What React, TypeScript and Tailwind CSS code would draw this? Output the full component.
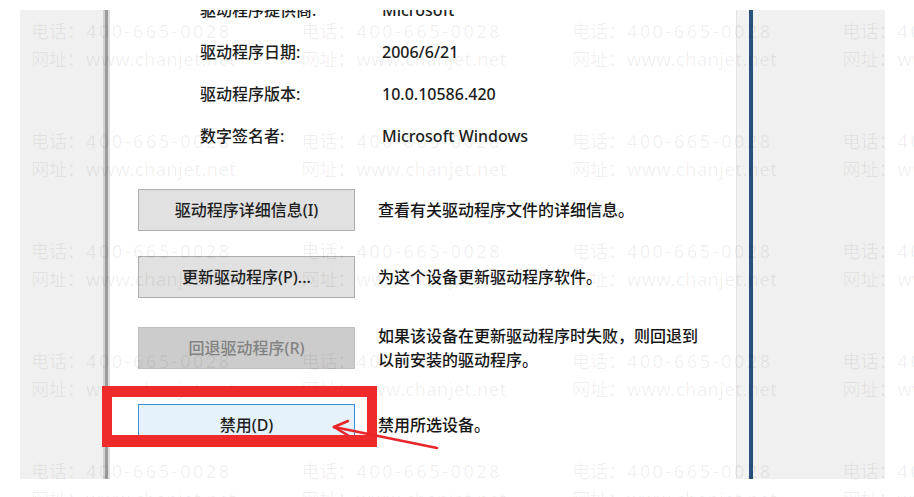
const cjk = '"Noto Sans", "Noto Sans CJK SC", sans-serif';

const infoRows = [
  { label: '驱动程序提供商:', value: 'Microsoft' },
  { label: '驱动程序日期:', value: '2006/6/21' },
  { label: '驱动程序版本:', value: '10.0.10586.420' },
  { label: '数字签名者:', value: 'Microsoft Windows' },
];

function DialogButton({
  label,
  variant = 'normal',
  className = '',
}: {
  label: string;
  variant?: 'normal' | 'disabled' | 'focused';
  className?: string;
}) {
  const styles = {
    normal: 'bg-[#e1e1e1] border-[#adadad] text-[#1f1f1f]',
    disabled: 'bg-[#cccccc] border-[#bfbfbf] text-[#838383]',
    focused: 'bg-[#e5f1fb] border-[#3a8fd9] text-[#1f1f1f]',
  }[variant];
  return (
    <div
      className={`w-[217px] h-[42px] shrink-0 border flex items-center justify-center text-[16px] font-medium ${styles} ${className}`}
    >
      {label}
    </div>
  );
}

function ButtonRow({
  label,
  variant,
  className = '',
  children,
}: {
  label: string;
  variant?: 'normal' | 'disabled' | 'focused';
  className?: string;
  children?: React.ReactNode;
}) {
  return (
    <div className={`flex items-center ml-[28px] ${className}`}>
      <DialogButton label={label} variant={variant} />
      <div className="ml-[23px] text-[16px] leading-[24px] font-medium text-[#161616]">{children}</div>
    </div>
  );
}

function Watermark() {
  const cols = [0, 1, 2, 3];
  const rows = [0, 1, 2, 3, 4];
  return (
    <div
      className="absolute left-[31px] top-[17px] pointer-events-none grid grid-cols-[repeat(4,270.5px)] auto-rows-[110px] text-[18px] leading-[28px] text-black/[0.065]"
      style={{ fontFamily: cjk }}
    >
      {rows.map((r) =>
        cols.map((c) => (
          <div key={`${r}-${c}`} className="whitespace-nowrap">
            <div className="flex">
              <span className="w-[55px] shrink-0">电话：</span>
              <span className="tracking-[2.6px]">400-665-0028</span>
            </div>
            <div className="flex">
              <span className="w-[55px] shrink-0">网址：</span>
              <span className="tracking-[0.6px]">www.chanjet.net</span>
            </div>
          </div>
        ))
      )}
    </div>
  );
}

export default function App() {
  return (
    <div className="relative w-[914px] h-[497px] bg-white overflow-hidden" style={{ fontFamily: cjk }}>
      <div className="pt-[10px] pl-[20px]">
        <div className="flex w-[865px] h-[469px] overflow-hidden">
          {/* left window edge */}
          <div className="w-[83px] bg-[#f0f0f0]" />
          <div className="w-[7px] flex">
            <div className="w-[2px] bg-[#d2d2d2]" />
            <div className="w-[3px] bg-[#9c9c9c]" />
            <div className="w-[2px] bg-[#e0e0e0]" />
          </div>

          {/* dialog body */}
          <div className="w-[626px] bg-white flex flex-col">
            <div className="-mt-[21px] pl-[90px] text-[16px] font-medium text-[#1c1c1c]">
              {infoRows.map((row) => (
                <div key={row.label} className="h-[42px] flex items-center">
                  <span className="w-[182px] shrink-0">{row.label}</span>
                  <span>{row.value}</span>
                </div>
              ))}
            </div>

            <ButtonRow label="驱动程序详细信息(I)" className="mt-[32px]">
              查看有关驱动程序文件的详细信息。
            </ButtonRow>
            <ButtonRow label="更新驱动程序(P)..." className="mt-[25px]">
              为这个设备更新驱动程序软件。
            </ButtonRow>
            <ButtonRow label="回退驱动程序(R)" variant="disabled" className="mt-[26px]">
              如果该设备在更新驱动程序时失败，则回退到
              <br />
              以前安装的驱动程序。
            </ButtonRow>
            <ButtonRow label="禁用(D)" variant="focused" className="mt-[32px]">
              禁用所选设备。
            </ButtonRow>
            <ButtonRow label="" className="mt-[33px]" />
          </div>

          {/* right window edge */}
          <div className="w-[13px] bg-[#f2f2f2] border-l border-[#e4e4e4]" />
          <div className="w-[4px] bg-[#27507f]" />
          <div className="w-[132px] bg-[#f0f0f0]" />
        </div>
      </div>

      <Watermark />

      {/* red annotation */}
      <div className="absolute left-[102px] top-[386px] w-[275px] h-[61px] border-x-[10px] border-t-[11px] border-b-[12px] border-[#ef2a2a]" />
      <svg className="absolute left-[326px] top-[414px]" width="118" height="40" viewBox="0 0 118 40">
        <g stroke="#e8262a" strokeWidth="2.6" strokeLinecap="round" fill="none">
          <line x1="111" y1="34" x2="8" y2="13" />
          <line x1="8" y1="13" x2="22" y2="7" />
          <line x1="8" y1="13" x2="23" y2="22" />
        </g>
      </svg>
    </div>
  );
}
